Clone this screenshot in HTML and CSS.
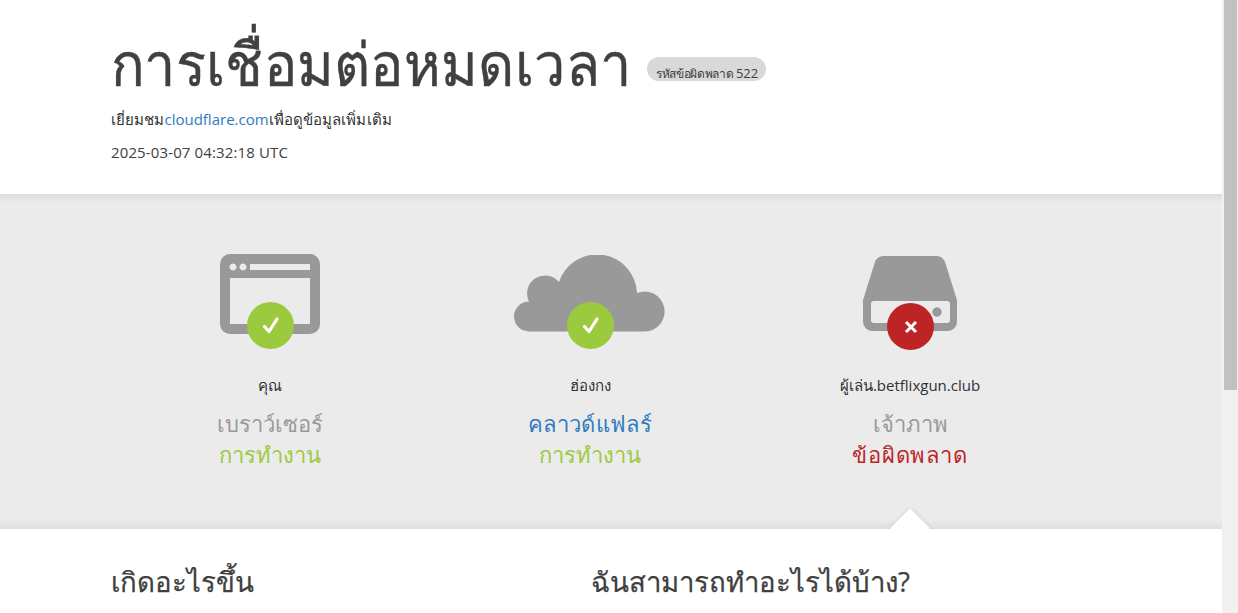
FILE: index.html
```html
<!DOCTYPE html>
<html lang="th">
<head>
<meta charset="utf-8">
<title>การเชื่อมต่อหมดเวลา</title>
<link rel="stylesheet" href="styles.css">
</head>
<body>
<div class="page">
  <main class="main">
    <header class="head">
      <h1 class="title"><span class="title-text">การเชื่อมต่อหมดเวลา</span><span class="code">รหัสข้อผิดพลาด <span class="code-num">522</span></span></h1>
      <p class="visit">เยี่ยมชม<a class="link" href="#">cloudflare.com</a>เพื่อดูข้อมูลเพิ่มเติม</p>
      <p class="time">2025-03-07 04:32:18 UTC</p>
    </header>
    <section class="status">
      <div class="cols">
        <div class="col">
          <div class="icon-wrap">
            <svg class="icon" width="100" height="80" viewBox="0 0 100 80"><path fill="#999" fill-rule="evenodd" d="M10 0h80a10 10 0 0 1 10 10v60a10 10 0 0 1-10 10H10A10 10 0 0 1 0 70V10A10 10 0 0 1 10 0zM10 24v46h80V24zM30 10v6h60v-6zM13 9.500a3.500 3.500 0 1 0 .01 0zM23 9.500a3.500 3.500 0 1 0 .01 0z"/></svg>
            <span class="badge ok br"><svg width="20" height="20" viewBox="0 0 20 20"><path d="M3.500 10.500l4.500 5 8-12.500" fill="none" stroke="#fff" stroke-width="3.200" stroke-linecap="round" stroke-linejoin="round"/></svg></span>
          </div>
          <div class="place">คุณ</div>
          <div class="kind">เบราว์เซอร์</div>
          <div class="state good">การทำงาน</div>
        </div>
        <div class="col">
          <div class="icon-wrap">
            <svg class="icon cloud" width="151" height="77" viewBox="0 0 151 77"><path fill="#999" d="M15 76.500A15 15 0 0 1 15 46.500A18 18 0 0 1 45 27A40 40 0 0 1 123 38A20 20 0 1 1 131 76.500z"/></svg>
            <span class="badge ok cl"><svg width="20" height="20" viewBox="0 0 20 20"><path d="M3.500 10.500l4.500 5 8-12.500" fill="none" stroke="#fff" stroke-width="3.200" stroke-linecap="round" stroke-linejoin="round"/></svg></span>
          </div>
          <div class="place">ฮ่องกง</div>
          <div class="kind blue">คลาวด์แฟลร์</div>
          <div class="state good">การทำงาน</div>
        </div>
        <div class="col">
          <div class="icon-wrap">
            <svg class="icon drive" width="94" height="75" viewBox="0 0 94 75"><path fill="#999" fill-rule="evenodd" d="M21 0h52c4 0 7.500 2 9 6l12 38v22a9 9 0 0 1-9 9H9a9 9 0 0 1-9-9V44L12 6C13.500 2 17 0 21 0zM11 45a3 3 0 0 0-3 3v16a3 3 0 0 0 3 3h73a3 3 0 0 0 3-3V48a3 3 0 0 0-3-3zM74 51.300a4.700 4.700 0 1 0 .01 0z"/></svg>
            <span class="badge bad sv"><svg width="16" height="16" viewBox="0 0 16 16"><path d="M3 3l10 10M13 3L3 13" fill="none" stroke="#fff" stroke-width="3"/></svg></span>
          </div>
          <div class="place">ผู้เล่น.betflixgun.club</div>
          <div class="kind">เจ้าภาพ</div>
          <div class="state err">ข้อผิดพลาด</div>
        </div>
      </div>
    </section>
    <section class="info">
      <span class="notch"></span>
      <div class="info-cols">
        <h2 class="sub">เกิดอะไรขึ้น</h2>
        <h2 class="sub">ฉันสามารถทำอะไรได้บ้าง?</h2>
      </div>
    </section>
  </main>
  <div class="scrollbar"><div class="thumb"></div></div>
</div>
</body>
</html>
```

FILE: styles.css
```css
* { box-sizing: border-box; }
html, body { margin: 0; height: 100%; overflow: hidden; }
body { font-family: "Open Sans", "Noto Sans", sans-serif; color: #404040; background: #fff; }
.page { display: flex; height: 613px; overflow: hidden; }
.main { flex: 0 0 1222px; height: 613px; overflow: hidden; }
.scrollbar { flex: 0 0 16px; background: #f1f1f1; padding: 0 1px 0 2px; }
.thumb { height: 390px; background: #c1c1c1; }
.head { height: 194px; padding: 0 111px; }
.title { margin: 0; padding-top: 24px; height: 102px; display: flex; align-items: center; font-size: 60px; font-weight: 400; line-height: 78px; color: #404040; }
.title-text { white-space: nowrap; transform: scaleX(0.93); transform-origin: left center; margin-right: -38px; -webkit-text-stroke: 0.4px #404040; }
.code { margin-left: 14px; margin-top: 12px; height: 24px; padding: 0 8px 0 9px; border-radius: 12px; background: #d9d9d9; font-size: 12px; font-weight: 400; letter-spacing: -0.35px; line-height: 33px; color: #404040; white-space: nowrap; }
.code-num { font-size: 13px; letter-spacing: 0; }
.visit { margin: 0; padding-top: 5px; font-size: 15px; line-height: 24px; letter-spacing: 0.08px; color: #313131; }
.link { color: #2f7bbf; text-decoration: none; letter-spacing: 0; }
.time { margin: 9px 0 0; font-size: 15px; line-height: 24px; letter-spacing: 0.13px; color: #404040; }
.status { height: 335px; background: linear-gradient(#dedede, #ebebeb 9px, #ebebeb 326px, #dedede); padding-top: 60px; }
.cols { display: flex; padding-left: 120px; }
.col { width: 300px; margin-right: 20px; text-align: center; }
.icon-wrap { position: relative; height: 96px; display: flex; justify-content: center; align-items: flex-start; }
.cloud { margin-top: 1px; margin-left: -1px; }
.drive { margin-top: 2px; }
.badge { position: absolute; width: 47px; height: 47px; border-radius: 50%; display: flex; align-items: center; justify-content: center; }
.ok { background: #9bca3e; }
.bad { background: #bd2426; }
.br { left: 127px; top: 48px; }
.cl { left: 127px; top: 48px; }
.sv { left: 127px; top: 49px; }
.place { margin-top: 23px; font-size: 15px; line-height: 24px; color: #313131; }
.kind { margin-top: 10px; font-size: 22px; line-height: 33px; color: #999; }
.blue { color: #2f7bbf; letter-spacing: 0.3px; }
.state { font-size: 22px; line-height: 29px; }
.good { color: #9bca3e; }
.err { color: #bd2426; letter-spacing: 0.8px; }
.info { position: relative; height: 84px; background: #fff; }
.notch { position: absolute; left: 880px; top: -21px; width: 60px; height: 21px; overflow: hidden; }
.notch::before { content: ""; position: absolute; left: 16px; top: 6px; width: 28px; height: 28px; background: #fff; transform: rotate(45deg); box-shadow: 0 0 5px rgba(0, 0, 0, 0.12); }
.info-cols { display: flex; padding: 0 111px; }
.sub { margin: 0; padding-top: 33px; width: 480px; font-size: 27.6px; font-weight: 500; line-height: 39px; -webkit-text-stroke: 0.25px #404040; color: #404040; white-space: nowrap; }
```
